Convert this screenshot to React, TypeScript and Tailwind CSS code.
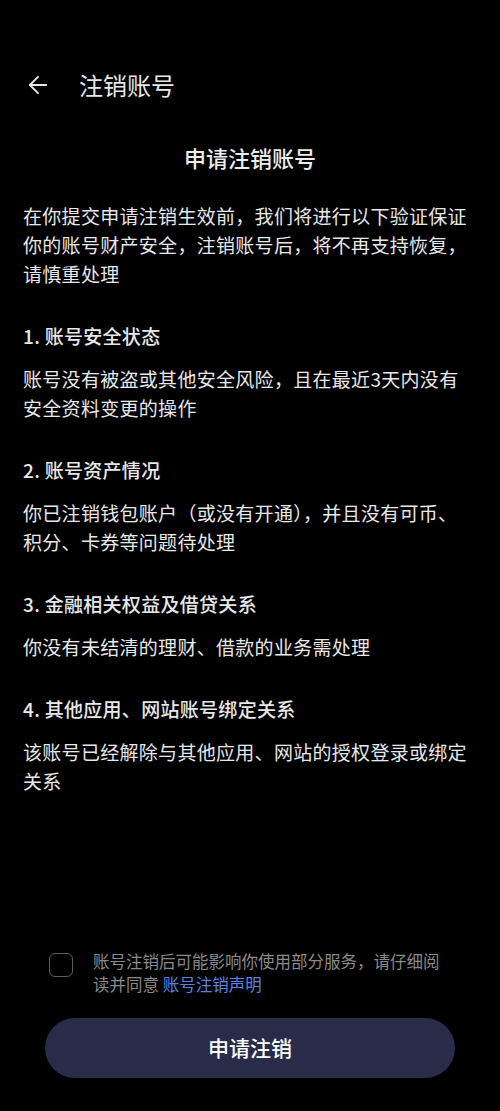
import { ArrowLeft } from 'lucide-react'

const sections = [
  {
    title: '1. 账号安全状态',
    body: <>账号没有被盗或其他安全风险，且在最近3天内没有安全资料变更的操作</>,
  },
  {
    title: '2. 账号资产情况',
    body: (
      <>
        你已注销钱包账户（或没有开通），并且没有可币、<span className="whitespace-nowrap">积分</span>、卡券等问题待处理
      </>
    ),
  },
  {
    title: '3. 金融相关权益及借贷关系',
    body: <>你没有未结清的理财、借款的业务需处理</>,
  },
  {
    title: '4. 其他应用、网站账号绑定关系',
    body: <>该账号已经解除与其他应用、网站的授权登录或绑定关系</>,
  },
]

export default function App() {
  return (
    <div
      className="w-[500px] h-[1111px] bg-black text-[#e8e8e8] flex flex-col"
      style={{ fontFamily: '"Noto Sans CJK SC", "Noto Sans", sans-serif' }}
    >
      {/* Header */}
      <header className="flex items-center h-[60px] mt-[55px] px-[24px]">
        <ArrowLeft className="w-[28px] h-[28px] text-[#e8e8e8]" strokeWidth={1.6} />
        <h1 className="ml-[27px] text-[24px] leading-none text-[#e8e8e8]">注销账号</h1>
      </header>

      {/* Content */}
      <main className="flex-1 px-[23px]">
        <h2 className="mt-[27px] text-center text-[22px] font-medium leading-[30px] text-[#ededed]">
          申请注销账号
        </h2>
        <p className="mt-[29px] text-[19px] leading-[29px] tracking-[0.3px]">
          在你提交申请注销生效前，我们将进行以下验证保证你的账号财产安全，注销账号后，将不再支持恢复，请慎重处理
        </p>

        {sections.map((s) => (
          <section key={s.title} className="mt-[33px]">
            <h3 className="text-[19px] font-medium leading-[29px] tracking-[0.3px]">{s.title}</h3>
            <p className="mt-[14px] text-[19px] leading-[29px] tracking-[0.3px]">{s.body}</p>
          </section>
        ))}
      </main>

      {/* Agreement */}
      <div className="flex items-start pl-[49px] pr-[50px]">
        <div className="mt-[3px] w-[24px] h-[24px] shrink-0 rounded-[6px] border-[1.5px] border-[#5c5c5c]" />
        <div className="ml-[20px] flex flex-col text-[16.5px] leading-[23px] text-[#8a8a8a]">
          <span>账号注销后可能影响你使用部分服务，请仔细阅</span>
          <span>
            读并同意 <span className="text-[#5b82e0]">账号注销声明</span>
          </span>
        </div>
      </div>

      {/* Button */}
      <div className="px-[45px] mt-[22px] mb-[33px]">
        <button className="w-full h-[60px] rounded-full bg-[#292c48] text-white text-[21px] font-medium">
          申请注销
        </button>
      </div>
    </div>
  )
}
